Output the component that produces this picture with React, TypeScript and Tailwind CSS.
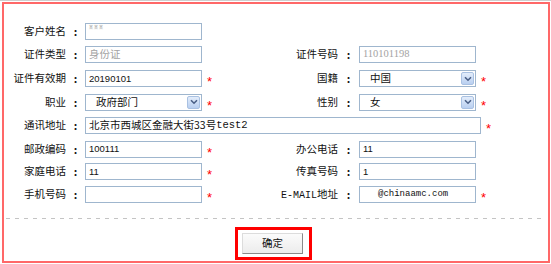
import React from 'react';

const cjk = "font-['Noto_Sans_CJK_SC','Liberation_Sans',sans-serif]";

const Star = () => (
  <span className="text-[13px] leading-none text-[#ff0000] font-['Liberation_Sans',sans-serif] translate-y-[3px]">*</span>
);

const Label = ({ text, right }: { text: React.ReactNode; right?: boolean }) => (
  <>
    <div className={`${right ? 'w-[68px]' : 'w-[62px]'} text-right text-[10.5px] leading-none text-[#111] whitespace-nowrap`}>{text}</div>
    <div className={`${right ? 'w-[21px]' : 'w-[19px]'} text-center text-[11px] font-bold leading-none text-[#111]`}>:</div>
  </>
);

const Input = ({ children, wide, top }: { children?: React.ReactNode; wide?: boolean; top?: boolean }) => (
  <div
    className={`${wide ? 'w-[396px]' : 'w-[117px]'} h-[17px] border border-[#9fb6ce] bg-white flex ${top ? 'items-start pt-[1px]' : 'items-center'} pl-[3px] overflow-hidden whitespace-nowrap`}
  >
    {children}
  </div>
);

const Select = ({ value }: { value: string }) => (
  <div className="w-[117px] h-[17px] border border-[#9fb6ce] bg-white flex items-center pl-[10px] pr-[1px]">
    <span className="text-[10.5px] leading-none text-[#111]">{value}</span>
    <div className="ml-auto w-[13px] h-[13px] rounded-[2px] border border-[#a9c1e2] bg-gradient-to-b from-[#e3edfb] to-[#b9cff0] flex items-center justify-center">
      <svg width="8" height="6" viewBox="0 0 8 6">
        <path d="M1 1.2 L4 4.2 L7 1.2" fill="none" stroke="#4a5f86" strokeWidth="1.6" />
      </svg>
    </div>
  </div>
);

const Half = ({ children, star, right }: { children: React.ReactNode; star?: boolean; right?: boolean }) => (
  <div className={`flex items-center ${right ? '' : 'w-[266px]'}`}>
    {children}
    <div className="pl-[5px] w-[14px] flex items-center">{star && <Star />}</div>
  </div>
);

const digits = "text-[9.5px] leading-none text-[#111] font-['Liberation_Sans',sans-serif]";

const App = () => {
  return (
    <div className={`w-[551px] h-[264px] bg-white border-t border-[#cfcfcf] ${cjk}`}>
      <div className="ml-[2px] mt-[1px] w-[548px] h-[261px] border-2 border-[#ff6868] flex flex-col pt-[16px]">
        {/* row 1 */}
        <div className="h-[23px] flex items-center">
          <Half>
            <Label text="客户姓名" />
            <Input top>
              <span className="text-[4px] leading-none text-[#9a9a9a] tracking-[1px]">某某某</span>
            </Input>
          </Half>
        </div>
        {/* row 2 */}
        <div className="h-[23px] flex items-center">
          <Half>
            <Label text="证件类型" />
            <Input>
              <span className="text-[10.5px] leading-none text-[#a3a3a3]">身份证</span>
            </Input>
          </Half>
          <Half right>
            <Label right text="证件号码" />
            <Input>
              <span className="text-[10.5px] leading-none text-[#a3a3a3] font-['Liberation_Serif',serif]">110101198</span>
            </Input>
          </Half>
        </div>
        {/* row 3 */}
        <div className="h-[25px] flex items-center">
          <Half star>
            <Label text="证件有效期" />
            <Input>
              <span className={digits}>20190101</span>
            </Input>
          </Half>
          <Half right star>
            <Label right text="国籍" />
            <Select value="中国" />
          </Half>
        </div>
        {/* row 4 */}
        <div className="h-[22px] flex items-center">
          <Half star>
            <Label text="职业" />
            <Select value="政府部门" />
          </Half>
          <Half right star>
            <Label right text="性别" />
            <Select value="女" />
          </Half>
        </div>
        {/* row 5 */}
        <div className="h-[25px] flex items-center">
          <Label text="通讯地址" />
          <Input wide>
            <span className="text-[10.5px] leading-none text-[#111]">北京市西城区金融大街33号</span>
            <span className="text-[10.5px] leading-none text-[#111] font-['Liberation_Mono',monospace]">test2</span>
          </Input>
          <div className="pl-[5px] flex items-center">
            <Star />
          </div>
        </div>
        {/* row 6 */}
        <div className="h-[22px] flex items-center">
          <Half star>
            <Label text="邮政编码" />
            <Input>
              <span className={digits}>100111</span>
            </Input>
          </Half>
          <Half right>
            <Label right text="办公电话" />
            <Input>
              <span className={digits}>11</span>
            </Input>
          </Half>
        </div>
        {/* row 7 */}
        <div className="h-[23px] flex items-center">
          <Half star>
            <Label text="家庭电话" />
            <Input>
              <span className={digits}>11</span>
            </Input>
          </Half>
          <Half right>
            <Label right text="传真号码" />
            <Input>
              <span className={digits}>1</span>
            </Input>
          </Half>
        </div>
        {/* row 8 */}
        <div className="h-[23px] flex items-center">
          <Half star>
            <Label text="手机号码" />
            <Input />
          </Half>
          <Half right star>
            <Label
              right
              text={
                <>
                  <span className="font-['Liberation_Mono',monospace] text-[10px]">E-MAIL</span>地址
                </>
              }
            />
            <Input>
              <span className="pl-[15px] text-[9px] leading-none text-[#111] font-['Liberation_Mono',monospace]">@chinaamc.com</span>
            </Input>
          </Half>
        </div>

        <div className="mt-[12px] mx-[2px] h-[1px] bg-[repeating-linear-gradient(90deg,#c4c4c4_0_4px,transparent_4px_9px)]" />

        <div className="mt-[8px] flex justify-center pr-[5px]">
          <div className="border-[3px] border-[#ff0000] pt-[3px] pb-[3px] pl-[4px] pr-[6px]">
            <div className="w-[61px] h-[21px] flex items-center justify-center bg-gradient-to-b from-[#fbfbfb] to-[#ececec] border border-t-[#dcdcdc] border-l-[#dcdcdc] border-r-[#8a8a8a] border-b-[#8a8a8a]">
              <span className="text-[10.5px] leading-none text-[#111]">确定</span>
            </div>
          </div>
        </div>
      </div>
    </div>
  );
};

export default App;
